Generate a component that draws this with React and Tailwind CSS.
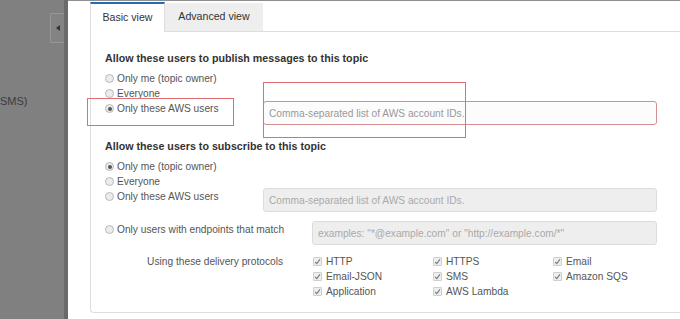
function Radio({ checked, label }) {
  return (
    <div className="flex h-[15px] items-center text-[10.2px] text-[#555]">
      <span className="mr-[3px] flex h-[9px] w-[9px] items-center justify-center rounded-full border border-[#b8b8b8] bg-[#ececec]">
        {checked && <span className="h-[4px] w-[4px] rounded-full bg-[#555]" />}
      </span>
      {label}
    </div>
  )
}

function Check({ label }) {
  return (
    <div className="flex h-[15px] items-center text-[10.2px] text-[#555]">
      <span className="mr-[4px] flex h-[9px] w-[9px] items-center justify-center rounded-[1px] border border-[#cfcfcf] bg-[#eeeeee]">
        <svg viewBox="0 0 10 10" className="h-[7px] w-[7px]">
          <path d="M1.5 5.5 L4 8 L8.5 2" stroke="#7a7a7a" strokeWidth="1.6" fill="none" />
        </svg>
      </span>
      {label}
    </div>
  )
}

function Field({ placeholder, width, error }) {
  return (
    <input
      readOnly
      placeholder={placeholder}
      className={
        error
          ? "block h-[24px] rounded-[3px] border border-[#d49090] bg-[#fcfcfc] px-[5px] text-[10.2px] outline-none placeholder:text-[#999]"
          : "block h-[24px] rounded-[3px] border border-[#dcdcdc] bg-[#eeeeee] px-[5px] text-[10.2px] outline-none placeholder:text-[#aaa]"
      }
      style={{ width }}
    />
  )
}

export default function App() {
  return (
    <div className="relative flex h-[319px] w-[680px] overflow-hidden bg-white font-['Liberation_Sans',Arial,sans-serif]">
      {/* greyed-out page behind the modal */}
      <div className="flex w-[68px] shrink-0 flex-col border-r-4 border-[#6a6a6a] bg-[#808080]">
        <div className="ml-[50px] mt-[13px] flex h-[30px] w-[14px] items-center justify-center rounded-l-[2px] border border-r-0 border-[#989898] bg-[#838383]">
          <span className="h-0 w-0 border-y-[3.5px] border-r-[4px] border-y-transparent border-r-[#333]" />
        </div>
        <div className="mt-[52px] whitespace-nowrap text-[11px] leading-[12px] text-[#3c3c3c]">SMS)</div>
      </div>

      <div className="flex-1 border-t border-[#8f8f8f] pl-[22px] pt-[1px]">
        <div className="flex h-[30px] items-end">
          <div className="flex h-[30px] w-[75px] items-center justify-center border-x border-t-2 border-x-[#dddddd] border-t-[#2b67b3] bg-white text-[10.6px] text-[#333]">
            Basic view
          </div>
          <div className="flex h-[29px] w-[98px] items-center justify-center border-b border-[#dddddd] bg-[#eeeeee] text-[10.6px] text-[#333]">
            Advanced view
          </div>
          <div className="h-full flex-1 border-b border-[#dddddd]" />
        </div>

        <div className="h-[281px] w-[620px] rounded-bl-[4px] border-b border-l border-[#dddddd] pl-[14px] pt-[19px]">
          <h3 className="text-[10.7px] font-bold leading-[14px] text-[#333]">
            Allow these users to publish messages to this topic
          </h3>
          <div className="mt-[6px]">
            <Radio label="Only me (topic owner)" />
            <Radio label="Everyone" />
            <div className="flex">
              <div className="w-[158px]">
                <Radio checked label="Only these AWS users" />
              </div>
              <Field error width="394px" placeholder="Comma-separated list of AWS account IDs." />
            </div>
          </div>

          <h3 className="mt-[14px] text-[10.7px] font-bold leading-[14px] text-[#333]">
            Allow these users to subscribe to this topic
          </h3>
          <div className="mt-[6px]">
            <Radio checked label="Only me (topic owner)" />
            <Radio label="Everyone" />
            <div className="flex">
              <div className="w-[158px]">
                <Radio label="Only these AWS users" />
              </div>
              <div className="-mt-[1px]">
                <Field width="394px" placeholder="Comma-separated list of AWS account IDs." />
              </div>
            </div>
            <div className="mt-[9px] flex">
              <div className="w-[207px] pt-[1px]">
                <Radio label="Only users with endpoints that match" />
              </div>
              <Field width="345px" placeholder={'examples: "*@example.com" or "http://example.com/*"'} />
            </div>
            <div className="mt-[9px] flex">
              <div className="h-[15px] w-[208px] pr-[30px] text-right text-[10.2px] leading-[15px] text-[#555]">
                Using these delivery protocols
              </div>
              <div className="grid grid-cols-[120px_120px_120px]">
                <Check label="HTTP" />
                <Check label="HTTPS" />
                <Check label="Email" />
                <Check label="Email-JSON" />
                <Check label="SMS" />
                <Check label="Amazon SQS" />
                <Check label="Application" />
                <Check label="AWS Lambda" />
              </div>
            </div>
          </div>
        </div>
      </div>

      {/* red annotation boxes drawn over the screenshot */}
      <div className="absolute left-[87px] top-[98px] h-[28px] w-[147px] border border-[#e07070]" />
      <div className="absolute left-[263px] top-[82px] h-[56px] w-[203px] border border-[#e07070]" />
    </div>
  )
}
